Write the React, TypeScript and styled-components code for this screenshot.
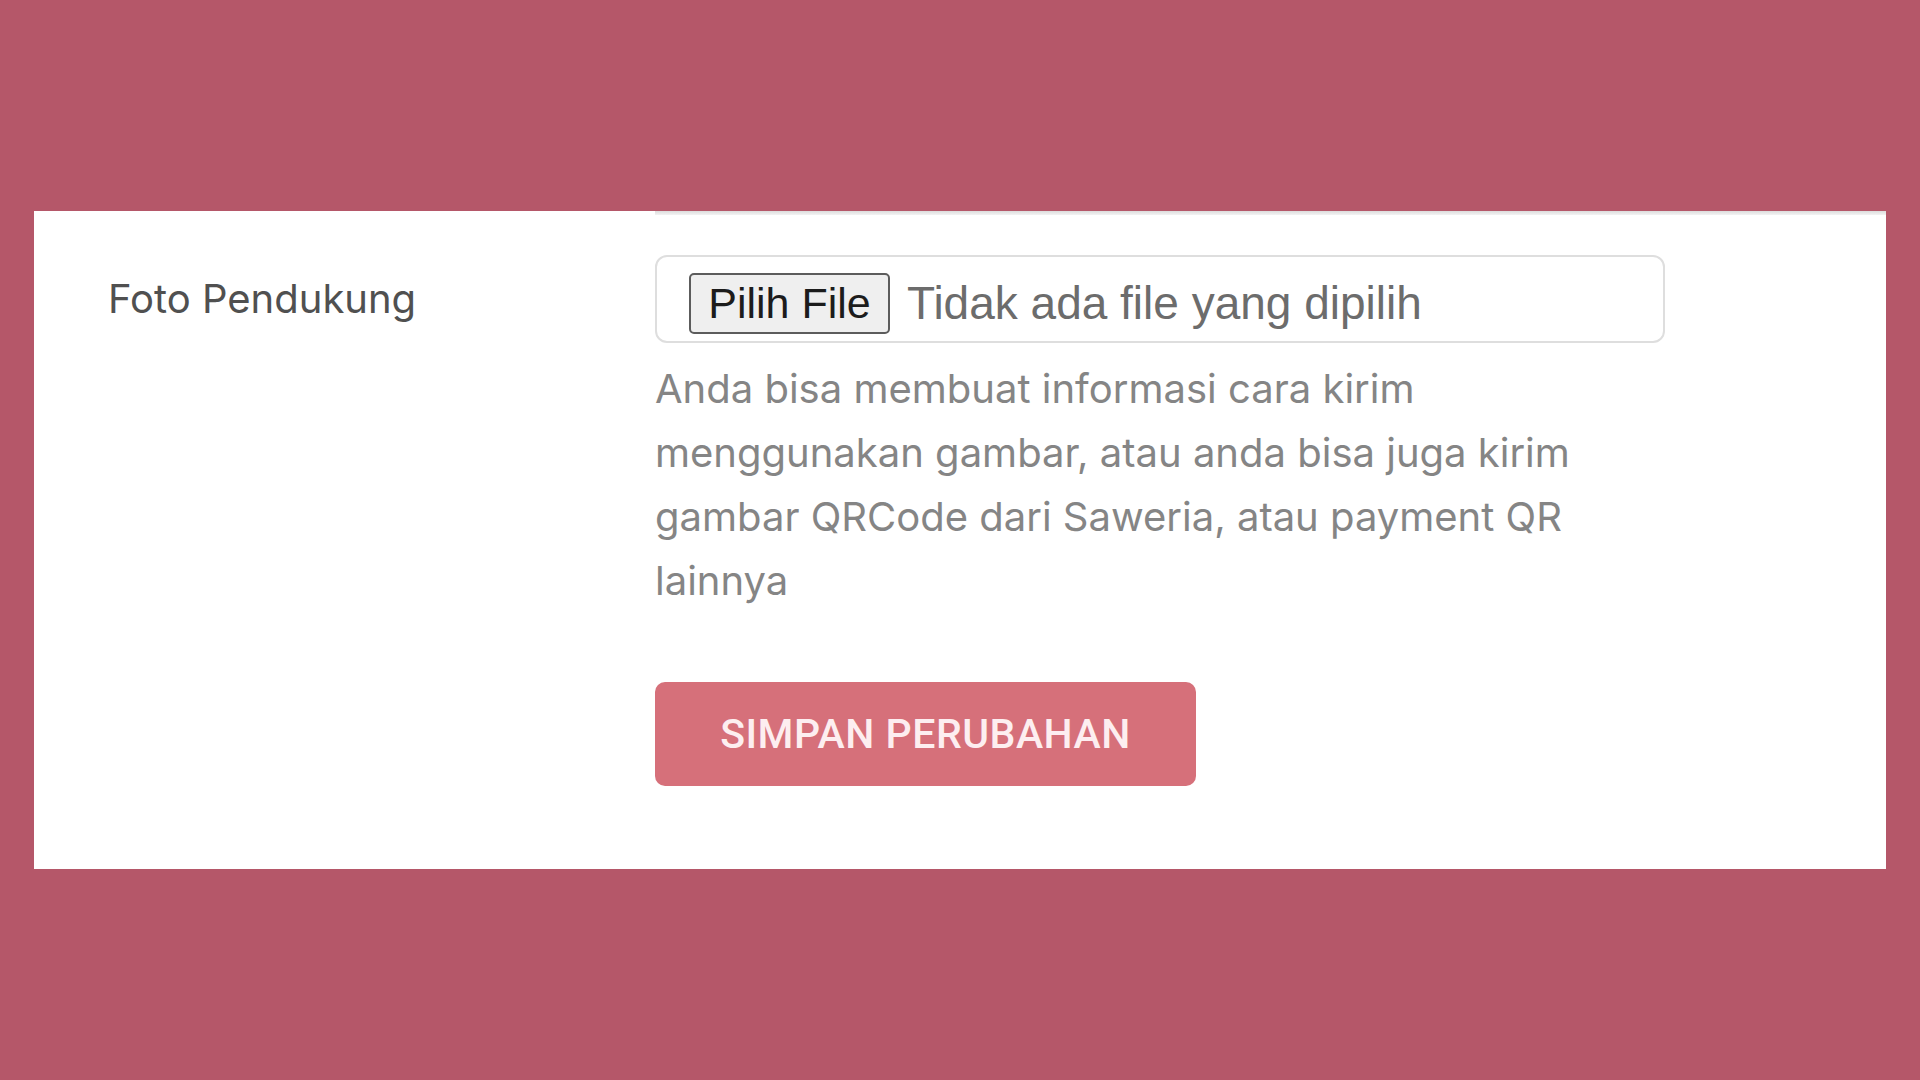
import styled, { createGlobalStyle } from 'styled-components'

const GlobalStyle = createGlobalStyle`
  html, body {
    margin: 0;
    padding: 0;
    background: #b55769;
  }
  body {
    font-family: Inter, "Liberation Sans", sans-serif;
  }
`

const Halaman = styled.div`
  min-height: 1080px;
  box-sizing: border-box;
  padding: 211px 34px 0;
  background: #b55769;
`

const Kartu = styled.section`
  width: 1852px;
  height: 658px;
  box-sizing: border-box;
  background: #ffffff;
  display: grid;
  grid-template-columns: 621px 1fr;
  grid-template-rows: auto auto auto;
  align-content: start;
`

const GarisAtas = styled.div`
  grid-column: 2;
  height: 4px;
  background: linear-gradient(#dcdcdc, #f3f3f3);
`

const Label = styled.label`
  grid-column: 1;
  margin-top: 40px;
  padding-left: 74px;
  height: 88px;
  line-height: 88px;
  font-size: 40px;
  color: #505050;
`

const KolomIsi = styled.div`
  grid-column: 2;
  margin-top: 40px;
  display: flex;
  flex-direction: column;
  width: 1010px;
`

const KotakFile = styled.label`
  display: flex;
  align-items: center;
  gap: 17px;
  height: 88px;
  box-sizing: border-box;
  padding: 8px 32px 0;
  border: 2px solid #dedede;
  border-radius: 12px;
  background: #fff;
  font-family: "Liberation Sans", Arial, sans-serif;
  cursor: pointer;
`

const TombolPilih = styled.span`
  display: inline-flex;
  align-items: center;
  justify-content: center;
  width: 201px;
  height: 61px;
  box-sizing: border-box;
  border: 2px solid #5c5c5c;
  border-radius: 5px;
  background: #efefef;
  font-size: 43px;
  color: #1c1c1c;
`

const NamaFile = styled.span`
  font-size: 46px;
  color: #6c6c6c;
`

const Bantuan = styled.p`
  margin: 14px 0 0;
  font-size: 40px;
  line-height: 64px;
  color: #858585;
`

const TombolSimpan = styled.button<{ $lebar: number }>`
  grid-column: 2;
  margin-top: 69px;
  width: ${p => p.$lebar}px;
  height: 104px;
  border: none;
  border-radius: 10px;
  background: #d6707a;
  color: #fdeef0;
  font-family: Roboto, "Liberation Sans", sans-serif;
  font-size: 41px;
  font-weight: 500;
  letter-spacing: 0.5px;
  cursor: pointer;
`

export default function App() {
  return (
    <>
      <GlobalStyle />
      <Halaman>
        <Kartu>
          <GarisAtas />
          <Label htmlFor="foto">Foto Pendukung</Label>
          <KolomIsi>
            <KotakFile htmlFor="foto">
              <TombolPilih>Pilih File</TombolPilih>
              <NamaFile>Tidak ada file yang dipilih</NamaFile>
              <input id="foto" type="file" hidden />
            </KotakFile>
            <Bantuan>
              Anda bisa membuat informasi cara kirim menggunakan gambar, atau anda bisa juga kirim
              gambar QRCode dari Saweria, atau payment QR lainnya
            </Bantuan>
          </KolomIsi>
          <TombolSimpan $lebar={541}>SIMPAN PERUBAHAN</TombolSimpan>
        </Kartu>
      </Halaman>
    </>
  )
}
